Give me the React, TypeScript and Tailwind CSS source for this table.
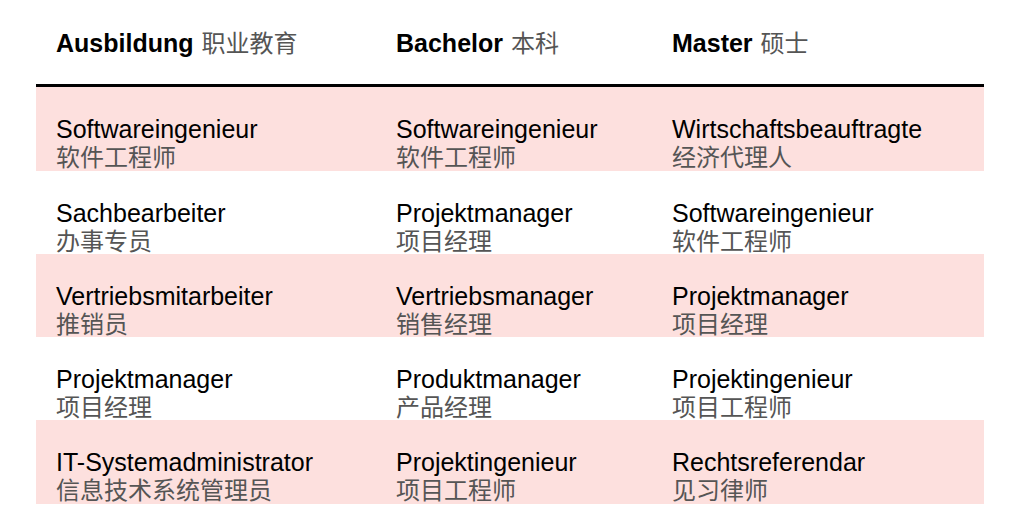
import React from "react";

const columns = [
  { de: "Ausbildung", zh: "职业教育", width: "w-[340px]" },
  { de: "Bachelor", zh: "本科", width: "w-[276px]" },
  { de: "Master", zh: "硕士", width: "flex-1" },
];

const rows: [string, string][][] = [
  [
    ["Softwareingenieur", "软件工程师"],
    ["Softwareingenieur", "软件工程师"],
    ["Wirtschaftsbeauftragte", "经济代理人"],
  ],
  [
    ["Sachbearbeiter", "办事专员"],
    ["Projektmanager", "项目经理"],
    ["Softwareingenieur", "软件工程师"],
  ],
  [
    ["Vertriebsmitarbeiter", "推销员"],
    ["Vertriebsmanager", "销售经理"],
    ["Projektmanager", "项目经理"],
  ],
  [
    ["Projektmanager", "项目经理"],
    ["Produktmanager", "产品经理"],
    ["Projektingenieur", "项目工程师"],
  ],
  [
    ["IT-Systemadministrator", "信息技术系统管理员"],
    ["Projektingenieur", "项目工程师"],
    ["Rechtsreferendar", "见习律师"],
  ],
];

const latin = "font-['Liberation_Sans','Noto_Sans_CJK_SC',sans-serif]";
const cjk = "font-['Noto_Sans_CJK_SC',sans-serif]";

export default function App() {
  return (
    <div className={`w-[1035px] h-[532px] bg-white ${latin}`}>
      <div className="ml-[36px] w-[948px]">
        <div className="flex h-[87px] border-b-[3px] border-black">
          {columns.map((c) => (
            <div key={c.de} className={`${c.width} pl-[20px] pt-[28px]`}>
              <span className="text-[25px] leading-[28px] font-bold text-black">{c.de}</span>
              <span className={`${cjk} ml-[8px] text-[24px] leading-[28px] text-[#555]`}>{c.zh}</span>
            </div>
          ))}
        </div>
        {rows.map((row, i) => (
          <div
            key={i}
            className={`flex ${i === 0 || i === 4 ? "h-[84px]" : "h-[83px]"} ${i % 2 === 0 ? "bg-[#fde0de]" : "bg-white"}`}
          >
            {row.map(([de, zh], j) => (
              <div key={j} className={`${columns[j].width} pl-[20px] pt-[29px]`}>
                <div className="text-[25px] leading-[26px] text-black">{de}</div>
                <div className={`${cjk} text-[24px] leading-[28px] text-[#555]`}>{zh}</div>
              </div>
            ))}
          </div>
        ))}
      </div>
    </div>
  );
}
